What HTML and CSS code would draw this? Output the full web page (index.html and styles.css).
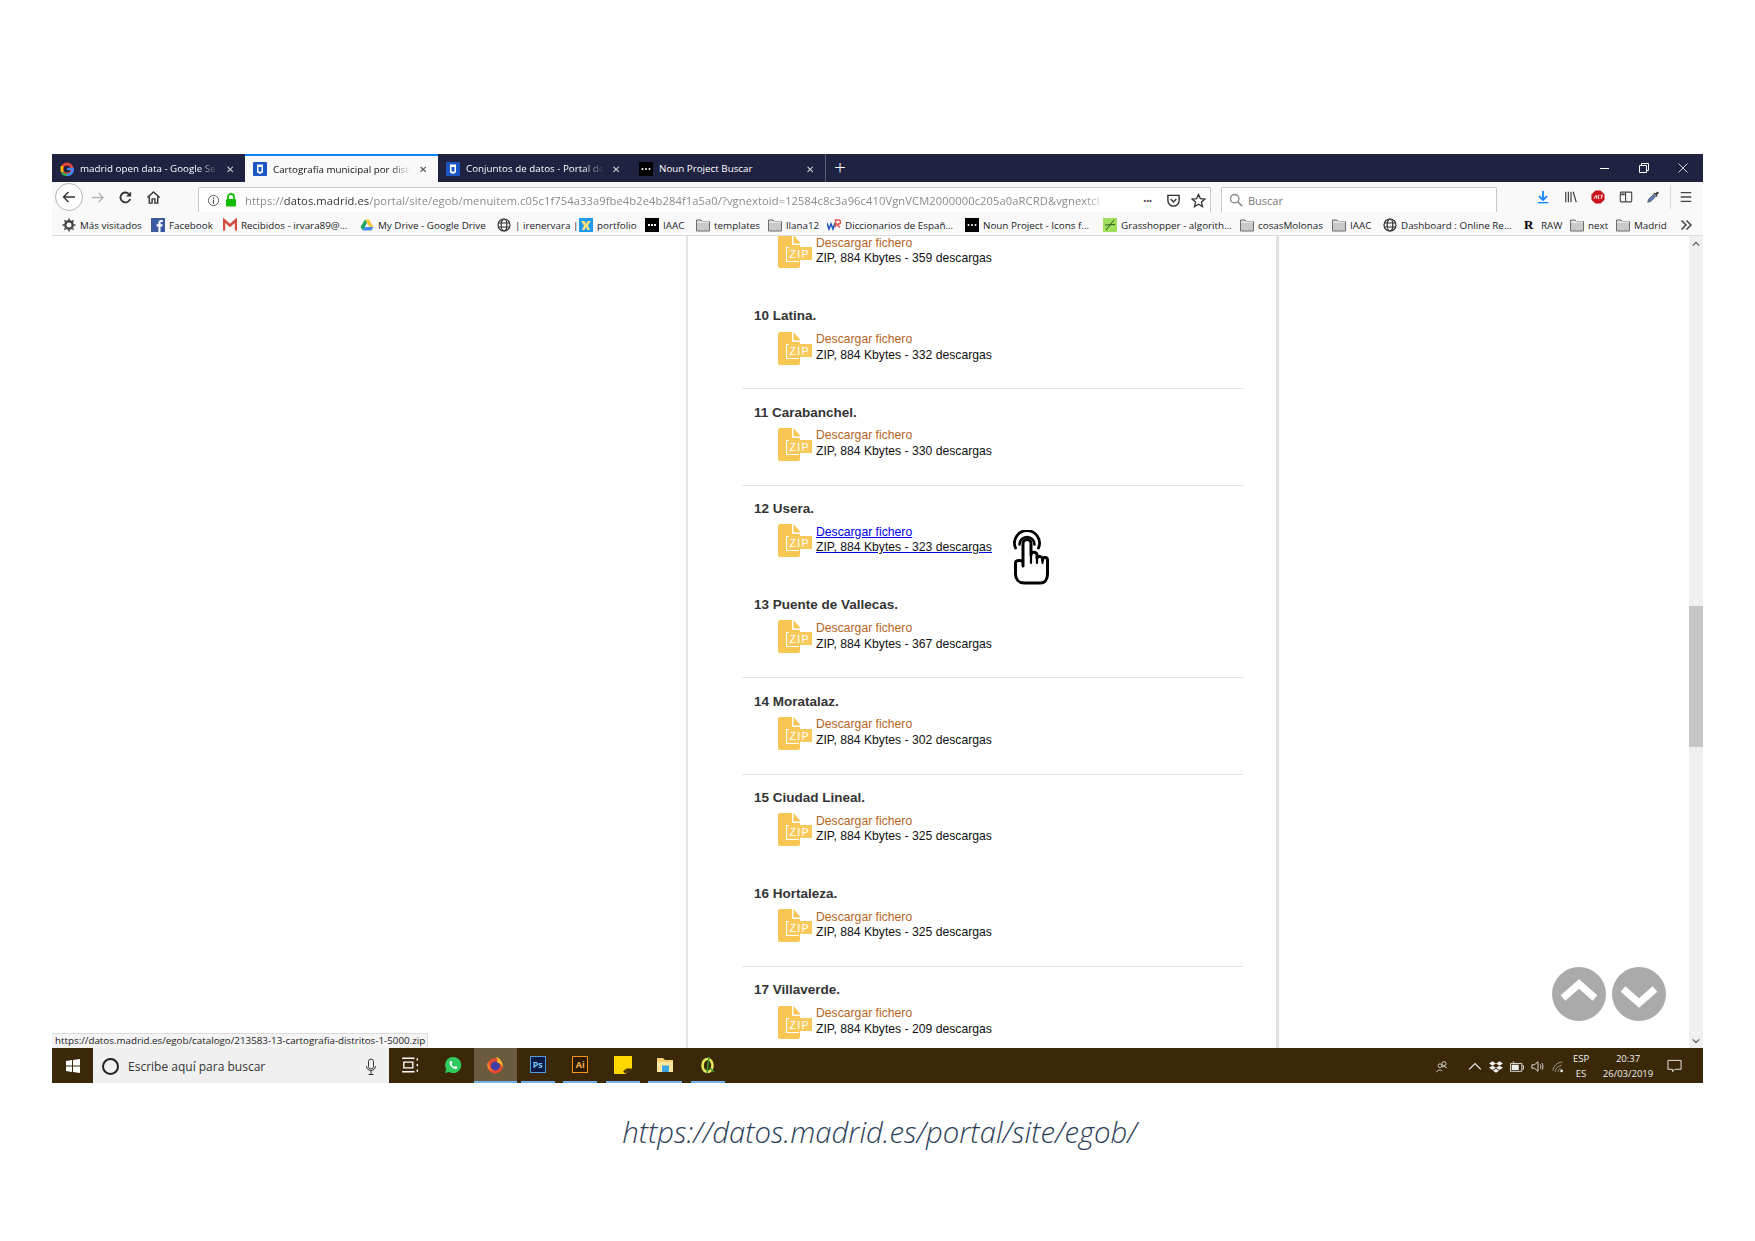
FILE: index.html
```html
<!DOCTYPE html>
<html lang="es">
<head>
<meta charset="utf-8">
<title>Cartografía municipal por distritos</title>
<link rel="stylesheet" href="styles.css">
</head>
<body>
<svg class="defs" width="0" height="0" aria-hidden="true">
  <symbol id="zip" viewBox="0 0 34 33">
    <path d="M2 0H14V9a1 1 0 0 0 1 1H22V31a2 2 0 0 1-2 2H2a2 2 0 0 1-2-2V2a2 2 0 0 1 2-2Z" fill="#f7c654"/>
    <path d="M15.5 0 22 7.5V8.5H15.5Z" fill="#f7c654"/>
    <rect x="9" y="12" width="25" height="13" fill="#f9c95c"/>
    <path d="M11 12.500H8.500V26.500H21" fill="none" stroke="#fff" stroke-width="1.100"/>
  </symbol>
  <symbol id="folder" viewBox="0 0 14 13">
    <path d="M.5 1.5H5L6.5 3H13.5V12.5H.5Z" fill="#c9c9c9" stroke="#6d6d6d"/>
    <path d="M1 3.5H13" stroke="#fff"/>
  </symbol>
  <symbol id="madrid" viewBox="0 0 14 14">
    <rect width="14" height="14" rx="1" fill="#1c55c4"/>
    <path d="M4 2.5H10V10.5L7 12 4 10.5Z" fill="#fff"/>
    <path d="M5.5 5H8.5V9.5H5.500Z" fill="#1c55c4"/>
  </symbol>
  <symbol id="noun" viewBox="0 0 14 14">
    <rect width="14" height="14" fill="#000"/>
    <circle cx="3.500" cy="7" r="1" fill="#fff"/><circle cx="7" cy="7" r="1" fill="#fff"/><circle cx="10.500" cy="7" r="1" fill="#fff"/>
  </symbol>
  <symbol id="globe" viewBox="0 0 14 14">
    <g fill="none" stroke="#333" stroke-width="1.200"><circle cx="7" cy="7" r="6"/><ellipse cx="7" cy="7" rx="2.800" ry="6"/><path d="M1 5H13M1 9H13"/></g>
  </symbol>
</svg>

<div class="screen">
  <div class="tabbar">
    <div class="tab">
      <svg class="fav" viewBox="0 0 14 14"><circle cx="7" cy="7" r="5" fill="none" stroke="#ea4335" stroke-width="3"/><path d="M7 7H13C13 10 10.500 13 7 13" fill="none" stroke="#4285f4" stroke-width="2.500"/><path d="M2 10.500C3 12 5 13 7 13" fill="none" stroke="#34a853" stroke-width="2.500"/><path d="M2 4V10" stroke="#fbbc05" stroke-width="2.500"/></svg>
      <span class="tab-title">madrid open data - Google Sea</span><span class="close">✕</span>
    </div>
    <div class="tab active">
      <svg class="fav"><use href="#madrid"/></svg>
      <span class="tab-title">Cartografía municipal por distr</span><span class="close">✕</span>
    </div>
    <div class="tab">
      <svg class="fav"><use href="#madrid"/></svg>
      <span class="tab-title">Conjuntos de datos - Portal de</span><span class="close">✕</span>
    </div>
    <div class="tab tab-last">
      <svg class="fav"><use href="#noun"/></svg>
      <span class="tab-title">Noun Project Buscar</span><span class="close">✕</span>
    </div>
    <div class="newtab">+</div>
    <div class="winctl">
      <svg viewBox="0 0 10 10"><path d="M0 5.500H9" stroke="#fff"/></svg>
      <svg viewBox="0 0 10 10"><path d="M.5 2.500H7.500V9.500H.5ZM2.500 2.500V.5H9.500V7.500H7.500" fill="none" stroke="#fff"/></svg>
      <svg viewBox="0 0 10 10"><path d="M.5.500 9.500 9.500M9.500.500.5 9.500" stroke="#fff" stroke-width=".8"/></svg>
    </div>
  </div>

  <div class="toolbar">
    <div class="navs">
      <span class="backbtn"><svg viewBox="0 0 16 16"><path d="M14 8H2.500M7.500 3 2.500 8 7.500 13" fill="none" stroke="#333" stroke-width="1.400"/></svg></span>
      <svg class="nav-ico" viewBox="0 0 16 16"><path d="M2 8H13.500M9 3 14 8 9 13" fill="none" stroke="#b5b5b5" stroke-width="1.400"/></svg>
      <svg class="nav-ico" viewBox="0 0 16 16"><path d="M13 9.500A5.300 5.300 0 1 1 11.500 4" fill="none" stroke="#333" stroke-width="2"/><path d="M14 1.500V7H8.500Z" fill="#333"/></svg>
      <svg class="nav-ico" viewBox="0 0 16 16"><path d="M1.500 8 8 2 14.500 8M3.500 7V14H6.500V9.500H9.500V14H12.500V7" fill="none" stroke="#333" stroke-width="1.500"/></svg>
    </div>
    <div class="urlbar">
      <svg class="info" viewBox="0 0 14 14"><circle cx="7" cy="7" r="5.500" fill="none" stroke="#555"/><path d="M7 6V10.500M7 3.500V5" stroke="#555" stroke-width="1.300"/></svg>
      <svg class="lock" viewBox="0 0 12 14"><path d="M3 6V4a3 3 0 0 1 6 0V6" fill="none" stroke="#12bc00" stroke-width="1.800"/><rect x="1" y="6" width="10" height="7.500" rx="1" fill="#12bc00"/></svg>
      <span class="url">https://<b>datos.madrid.es</b>/portal/site/egob/menuitem.c05c1f754a33a9fbe4b2e4b284f1a5a0/?vgnextoid=12584c8c3a96c410VgnVCM2000000c205a0aRCRD&amp;vgnextcl</span>
      <span class="dots">•••</span>
      <svg class="pa" viewBox="0 0 16 16"><path d="M2 2.500H14V8A6 6 0 0 1 2 8Z" fill="none" stroke="#333" stroke-width="1.500"/><path d="M5 6.500 8 9.500 11 6.500" fill="none" stroke="#333" stroke-width="1.500"/></svg>
      <svg class="pa" viewBox="0 0 16 16"><path d="M8 1.500 10 6 14.800 6.500 11.200 9.700 12.300 14.500 8 12 3.700 14.500 4.800 9.700 1.200 6.500 6 6Z" fill="none" stroke="#333" stroke-width="1.400"/></svg>
    </div>
    <div class="searchbar">
      <svg viewBox="0 0 16 16"><circle cx="6.500" cy="6.500" r="4.800" fill="none" stroke="#8a8a8a" stroke-width="1.600"/><path d="M10 10 15 15" stroke="#8a8a8a" stroke-width="1.800"/></svg>
      <span>Buscar</span>
    </div>
    <div class="tools">
      <svg viewBox="0 0 16 16"><path d="M8 1V11M3.500 7 8 11.500 12.500 7" fill="none" stroke="#0a84ff" stroke-width="2"/><path d="M2 14.500H14" stroke="#0a84ff" stroke-width="1.500"/></svg>
      <svg viewBox="0 0 16 16"><path d="M2 2V14M5 2V14M8 2V14M10.500 2 14 14" fill="none" stroke="#444" stroke-width="1.400"/></svg>
      <svg viewBox="0 0 16 16"><path d="M5 .5H11L15.500 5V11L11 15.500H5L.5 11V5Z" fill="#c8141b"/><path d="M3.500 10 5.500 6M6.500 10V6M9.500 6H8.500V10H9.500M11 6H13L11.500 10" fill="none" stroke="#fff" stroke-width="1.100"/></svg>
      <svg viewBox="0 0 16 16"><rect x="1.500" y="2.500" width="13" height="11" rx="1" fill="none" stroke="#444" stroke-width="1.300"/><path d="M7.500 2.500V13.500" stroke="#444" stroke-width="1.300"/><rect x="2.500" y="4" width="4" height="2" fill="#444"/></svg>
      <svg viewBox="0 0 16 16"><path d="M2 14 3 10.500 8.500 5 11 7.500 5.500 13Z" fill="#5c7fc0" stroke="#555"/><path d="M9 3.500 10.500 5 13 2.500 14 3.500 11.500 6 13 7.500" fill="#333" stroke="#333" stroke-width="1.200"/></svg>
      <i class="toolsep"></i>
      <svg viewBox="0 0 16 16"><path d="M2 3H14M2 8H14M2 13H14" stroke="#444" stroke-width="1.600"/></svg>
    </div>
  </div>

  <nav class="bookmarks">
    <a class="bm"><svg viewBox="0 0 14 14"><circle cx="7" cy="7" r="3.700" fill="none" stroke="#444" stroke-width="2.400"/><path d="M7 .5V13.500M.5 7H13.500M2.400 2.400 11.600 11.600M11.600 2.400 2.400 11.600" stroke="#444" stroke-width="1.500" stroke-dasharray="2 9.500"/></svg><span>Más visitados</span></a>
    <a class="bm"><svg viewBox="0 0 14 14"><rect width="14" height="14" fill="#3b5a9f"/><path d="M9.500 14V8.500H11.300L11.600 6.300H9.500V5C9.500 4.300 9.700 3.900 10.600 3.900H11.700V2C11.300 2 10.800 1.900 10.200 1.900 8.600 1.900 7.400 2.900 7.400 4.700V6.300H5.600V8.500H7.400V14Z" fill="#fff"/></svg><span>Facebook</span></a>
    <a class="bm"><svg viewBox="0 0 14 14"><path d="M1 12.500V2L7 7.500 13 2V12.500" fill="none" stroke="#d54b3d" stroke-width="2.400"/></svg><span>Recibidos - irvara89@...</span></a>
    <a class="bm"><svg viewBox="0 0 14 14"><path d="M5 1.500H9L13.500 9H9.500Z" fill="#f7c634"/><path d="M5 1.500 7 5 2.800 12.500.5 9Z" fill="#1fa463"/><path d="M4.500 9H13.500L11.300 12.500H2.800Z" fill="#4688f4"/></svg><span>My Drive - Google Drive</span></a>
    <a class="bm"><svg><use href="#globe"/></svg><span>| irenervara |</span></a>
    <a class="bm"><svg viewBox="0 0 14 14"><rect width="14" height="14" fill="#1e9bef"/><path d="M2 3H5.500L7 6 8.500 3H12L9 7.500 11 12H8.500L7 9 5.500 12H3L5 7.500Z" fill="#ffe27a"/></svg><span>portfolio</span></a>
    <a class="bm"><svg viewBox="0 0 14 14"><rect width="14" height="14" fill="#000"/><path d="M3 7H11" stroke="#fff" stroke-width="2" stroke-dasharray="2 1"/></svg><span>IAAC</span></a>
    <a class="bm"><svg><use href="#folder"/></svg><span>templates</span></a>
    <a class="bm"><svg><use href="#folder"/></svg><span>llana12</span></a>
    <a class="bm"><svg viewBox="0 0 14 14"><path d="M0 5 2 11 4 6 6 11 8 5" fill="none" stroke="#2458c6" stroke-width="1.600"/><path d="M8.500 9V2H11.500A2 2 0 0 1 11.500 6H9.500L13 9.500" fill="none" stroke="#e2554a" stroke-width="1.500"/></svg><span>Diccionarios de Españ...</span></a>
    <a class="bm"><svg><use href="#noun"/></svg><span>Noun Project - Icons f...</span></a>
    <a class="bm"><svg viewBox="0 0 14 14"><rect width="14" height="14" fill="#9ede5c"/><path d="M3 12 11 2M2 7 12 6.500" stroke="#2d5a1c"/></svg><span>Grasshopper - algorith...</span></a>
    <a class="bm"><svg><use href="#folder"/></svg><span>cosasMolonas</span></a>
    <a class="bm"><svg><use href="#folder"/></svg><span>IAAC</span></a>
    <a class="bm"><svg><use href="#globe"/></svg><span>Dashboard : Online Re...</span></a>
    <a class="bm"><b class="r-logo">R</b><span>RAW</span></a>
    <a class="bm"><svg><use href="#folder"/></svg><span>next</span></a>
    <a class="bm"><svg><use href="#folder"/></svg><span>Madrid</span></a>
    <svg class="more" viewBox="0 0 12 12"><path d="M1.500 1.500 6 6 1.500 10.500M6.500 1.500 11 6 6.500 10.500" fill="none" stroke="#444" stroke-width="1.500"/></svg>
  </nav>

  <div class="page">
    <main class="viewport">
      <section class="panel">
        <div class="list">
          <article class="row row-cut">
            <div class="file"><svg class="zip" viewBox="0 0 34 33"><use href="#zip"/><text x="11.500" y="22.500" class="ziptext">ZIP</text></svg><p><a>Descargar fichero</a><br>ZIP, 884 Kbytes - 359 descargas</p></div>
          </article>
          <article class="row sep">
            <h3>10 Latina.</h3>
            <div class="file"><svg class="zip" viewBox="0 0 34 33"><use href="#zip"/><text x="11.500" y="22.500" class="ziptext">ZIP</text></svg><p><a>Descargar fichero</a><br>ZIP, 884 Kbytes - 332 descargas</p></div>
          </article>
          <article class="row sep">
            <h3>11 Carabanchel.</h3>
            <div class="file"><svg class="zip" viewBox="0 0 34 33"><use href="#zip"/><text x="11.500" y="22.500" class="ziptext">ZIP</text></svg><p><a>Descargar fichero</a><br>ZIP, 884 Kbytes - 330 descargas</p></div>
          </article>
          <article class="row">
            <h3>12 Usera.</h3>
            <div class="file hover"><svg class="zip" viewBox="0 0 34 33"><use href="#zip"/><text x="11.500" y="22.500" class="ziptext">ZIP</text></svg><p><a>Descargar fichero</a><br>ZIP, 884 Kbytes - 323 descargas</p></div>
          </article>
          <article class="row sep">
            <h3>13 Puente de Vallecas.</h3>
            <div class="file"><svg class="zip" viewBox="0 0 34 33"><use href="#zip"/><text x="11.500" y="22.500" class="ziptext">ZIP</text></svg><p><a>Descargar fichero</a><br>ZIP, 884 Kbytes - 367 descargas</p></div>
          </article>
          <article class="row sep">
            <h3>14 Moratalaz.</h3>
            <div class="file"><svg class="zip" viewBox="0 0 34 33"><use href="#zip"/><text x="11.500" y="22.500" class="ziptext">ZIP</text></svg><p><a>Descargar fichero</a><br>ZIP, 884 Kbytes - 302 descargas</p></div>
          </article>
          <article class="row">
            <h3>15 Ciudad Lineal.</h3>
            <div class="file"><svg class="zip" viewBox="0 0 34 33"><use href="#zip"/><text x="11.500" y="22.500" class="ziptext">ZIP</text></svg><p><a>Descargar fichero</a><br>ZIP, 884 Kbytes - 325 descargas</p></div>
          </article>
          <article class="row sep">
            <h3>16 Hortaleza.</h3>
            <div class="file"><svg class="zip" viewBox="0 0 34 33"><use href="#zip"/><text x="11.500" y="22.500" class="ziptext">ZIP</text></svg><p><a>Descargar fichero</a><br>ZIP, 884 Kbytes - 325 descargas</p></div>
          </article>
          <article class="row">
            <h3>17 Villaverde.</h3>
            <div class="file"><svg class="zip" viewBox="0 0 34 33"><use href="#zip"/><text x="11.500" y="22.500" class="ziptext">ZIP</text></svg><p><a>Descargar fichero</a><br>ZIP, 884 Kbytes - 209 descargas</p></div>
          </article>
        </div>
      </section>
    </main>
    <aside class="scrollbar">
      <svg class="sb-arrow" viewBox="0 0 10 6"><path d="M1 5 5 1 9 5" fill="none" stroke="#555" stroke-width="1.500"/></svg>
      <div class="thumb"></div>
      <svg class="sb-arrow sb-down" viewBox="0 0 10 6"><path d="M1 1 5 5 9 1" fill="none" stroke="#555" stroke-width="1.500"/></svg>
    </aside>

    <svg class="hand" viewBox="0 0 36 55">
      <g fill="none" stroke="#000" stroke-linecap="round" stroke-linejoin="round">
        <path d="M2.500 18A12.500 12.500 0 1 1 25.500 18" stroke-width="2.800"/>
        <path d="M6.500 14.500A7.500 7.500 0 1 1 21.500 14.500" stroke-width="2.600"/>
        <path d="M10 36V13.500a4 4 0 0 1 8 0V25a3 3 0 0 1 6 .5V28a3 3 0 0 1 5.500 .5V30a2.500 2.500 0 0 1 5 0V44c0 5-2.500 9-7 9H11c-5 0-8.500-3.500-8.500-9V33c0-3.500 7.500-3.500 7.500 0Z" fill="#fff" stroke-width="3"/>
        <path d="M18 25V33M24 26V33M29.500 29V33" stroke-width="2.200"/>
      </g>
    </svg>

    <div class="pager">
      <span class="round"><svg viewBox="0 0 54 54"><path d="M11 31 27 17 43 31" fill="none" stroke="#fff" stroke-width="7"/></svg></span>
      <span class="round"><svg viewBox="0 0 54 54"><path d="M11 22 27 36 43 22" fill="none" stroke="#fff" stroke-width="7"/></svg></span>
    </div>

    <div class="status">https://datos.madrid.es/egob/catalogo/213583-13-cartografia-distritos-1-5000.zip</div>
  </div>

  <footer class="taskbar">
    <div class="start"><svg viewBox="0 0 14 14"><path d="M0 2 6 1.100V6.500H0ZM7 1 14 0V6.500H7ZM0 7.500H6V12.900L0 12ZM7 7.500H14V14L7 13Z" fill="#fff"/></svg></div>
    <div class="tsearch">
      <i class="cortana"></i><span>Escribe aquí para buscar</span>
      <svg viewBox="0 0 12 18"><rect x="3.500" y="1" width="5" height="10" rx="2.500" fill="none" stroke="#333"/><path d="M1.500 8C1.500 14 10.500 14 10.500 8M6 13V16M3.500 16.500H8.500" fill="none" stroke="#333"/></svg>
    </div>
    <div class="tile"><svg viewBox="0 0 16 16"><path d="M1 2H12M1 14H12M2.500 5.500H10.500V10.500H2.500ZM14.500 2V4M14.500 7V9M14.500 12V14" fill="none" stroke="#fff" stroke-width="1.200"/></svg></div>
    <div class="tile"><svg viewBox="0 0 18 18"><path d="M9 1A8 8 0 0 0 2.200 13L1 17 5.200 15.900A8 8 0 1 0 9 1Z" fill="#2ecc5e"/><path d="M6 5C4.500 7 7 13 12.500 13L13.500 11 11.500 10 10.500 11C9 10.500 8 9.500 7.500 8L8.500 7 7.500 5Z" fill="#fff"/></svg></div>
    <div class="tile current"><svg viewBox="0 0 20 20"><circle cx="10" cy="11" r="8.500" fill="#e8482d"/><circle cx="10.500" cy="11" r="5" fill="#3f3fa8"/><path d="M11 .5C16 3 19.500 7 18.500 13 17.500 10 15 7.500 12 7 13 5 12.500 3 11 .5Z" fill="#ffb52e"/><path d="M3 6C2 10 4 15 9 16 5.500 17 2 14 1.500 10 1.500 8 2 7 3 6Z" fill="#ff9a2e"/></svg></div>
    <div class="tile open"><span class="app ps">Ps</span></div>
    <div class="tile open"><span class="app ai">Ai</span></div>
    <div class="tile open"><svg viewBox="0 0 16 16"><path d="M0 0H16V11L11 16H0Z" fill="#ffd800"/><path d="M11 16V11H16Z" fill="#3b2a0c"/><path d="M11 16 8 14 11 11Z" fill="#3b2a0c"/></svg></div>
    <div class="tile open"><svg viewBox="0 0 18 16"><path d="M1 1H7L9 3H17V15H1Z" fill="#f4cf6e"/><path d="M1 5H17V15H1Z" fill="#fbe59f"/><rect x="6" y="8.500" width="7" height="6.500" fill="#3aa5e0"/></svg></div>
    <div class="tile open"><svg viewBox="0 0 16 18"><ellipse cx="7.500" cy="9.500" rx="5" ry="6.500" fill="none" stroke="#e8e65c" stroke-width="2.600"/><path d="M9 1 7 17M10 12 14 16" stroke="#3f9b32" stroke-width="1.600"/></svg></div>
    <div class="tray">
      <svg class="tr tr-people" viewBox="0 0 16 16"><circle cx="10.500" cy="4.500" r="2.500" fill="none" stroke="#eee"/><circle cx="5.500" cy="7" r="2.300" fill="none" stroke="#eee"/><path d="M1.500 15C2 11.500 8 11.500 8 14M8 8.500C10 7.800 13 8 14 10" fill="none" stroke="#eee"/></svg>
      <svg class="tr" viewBox="0 0 12 8"><path d="M1 6.500 6 1.500 11 6.500" fill="none" stroke="#eee"/></svg>
      <svg class="tr" viewBox="0 0 16 14"><path d="M4 1 8 3.500 4 6 0 3.500ZM12 1 16 3.500 12 6 8 3.500ZM4 6 8 8.500 4 11 0 8.500ZM12 6 16 8.500 12 11 8 8.500ZM4.500 11.800 8 9.500 11.500 11.800 8 14Z" fill="#eee"/></svg>
      <svg class="tr" viewBox="0 0 16 14"><path d="M.5 3.500V12.500H13.500V3.500ZM14 6H15.500V10H14" fill="none" stroke="#eee"/><rect x="2" y="5" width="8" height="6" fill="#eee"/><path d="M3.500 1 5 4" stroke="#eee"/></svg>
      <svg class="tr" viewBox="0 0 16 14"><path d="M1 5H4L8 1.500V12.500L4 9H1Z" fill="none" stroke="#eee"/><path d="M10.500 4.500C11.500 6 11.500 8 10.500 9.500M12.500 3C14 5 14 9 12.500 11" fill="none" stroke="#eee"/></svg>
      <svg class="tr" viewBox="0 0 16 14"><path d="M1 12C1 7 6 2 12 2M4 13C4 9 7 6 11 6M7 13C7 11 8.500 9.500 10 9.500" fill="none" stroke="#aaa"/><circle cx="11" cy="12" r="1.500" fill="#eee"/></svg>
      <div class="lang">ESP<br>ES</div>
      <div class="clock">20:37<br>26/03/2019</div>
      <svg class="notif" viewBox="0 0 16 14"><path d="M1 1H15V10.500H8.500L6 13V10.500H1Z" fill="none" stroke="#eee"/></svg>
    </div>
  </footer>

  <p class="caption">https://datos.madrid.es/portal/site/egob/</p>
</div>
</body>
</html>
```

FILE: styles.css
```css
* { box-sizing: border-box; }
html, body { margin: 0; height: 100%; background: #fff; overflow: hidden; }
.defs { position: absolute; }
.screen { width: 1651px; margin: 154px 0 0 52px; font-family: "Open Sans", "Noto Sans", sans-serif; }

/* tabs */
.tabbar { height: 28px; background: #1f2240; display: flex; color: #fff; font-size: 9.800px; }
.tab { width: 193px; display: flex; align-items: center; padding: 1px 9px 0 8px; gap: 6px; }
.tab-last { width: 195px; border-right: 1px solid #5a5c74; }
.tab.active { background: #f9f9fa; color: #111; border-top: 2px solid #0a84ff; padding-top: 0; }
.fav { width: 14px; height: 14px; flex: none; }
.tab-title {
  flex: 1; min-width: 0; white-space: nowrap;
  -webkit-mask-image: linear-gradient(90deg, #000 85%, transparent);
  mask-image: linear-gradient(90deg, #000 85%, transparent);
}
.tab-last .tab-title { -webkit-mask-image: none; mask-image: none; }
.close { width: 12px; font-size: 10px; text-align: center; flex: none; opacity: .8; }
.newtab { width: 28px; text-align: center; font-size: 21px; line-height: 26px; font-weight: 300; }
.winctl { margin-left: auto; display: flex; align-items: center; }
.winctl svg { width: 10px; height: 10px; margin-right: 29px; }
.winctl svg:last-child { margin-right: 15px; }

/* toolbar */
.toolbar { height: 30px; background: #f9f9fa; display: flex; align-items: flex-end; }
.navs { width: 146px; height: 30px; display: flex; align-items: center; padding-left: 3px; flex: none; }
.backbtn { width: 28px; height: 28px; border: 1px solid #b4b4b4; border-radius: 50%; background: #fff; display: flex; align-items: center; justify-content: center; flex: none; margin-right: 7px; }
.backbtn svg { width: 16px; height: 16px; }
.nav-ico { width: 15px; height: 15px; margin-right: 13px; flex: none; }
.urlbar {
  width: 1013px; height: 25px; background: #fff; border: 1px solid #c8c8c8; border-bottom: 0; border-radius: 2px 2px 0 0;
  display: flex; align-items: center; padding: 0 4px 0 8px; flex: none;
}
.info { width: 13px; height: 13px; flex: none; margin-right: 5px; }
.lock { width: 12px; height: 14px; flex: none; margin-right: 8px; }
.url {
  flex: 1; min-width: 0; white-space: nowrap; overflow: hidden; font-size: 11.200px; color: #8a8a8a; letter-spacing: .08px;
  -webkit-mask-image: linear-gradient(90deg, #000 97%, transparent);
  mask-image: linear-gradient(90deg, #000 97%, transparent);
}
.url b { font-weight: 400; color: #333; }
.dots { font-size: 9px; color: #444; margin-left: 33px; width: 23px; letter-spacing: -.5px; flex: none; }
.pa { width: 15px; height: 15px; margin-right: 10px; flex: none; }
.pa:last-child { margin-right: 0; }
.searchbar {
  width: 276px; height: 25px; margin-left: 10px; background: #fff; border: 1px solid #c8c8c8; border-bottom: 0; border-radius: 2px 2px 0 0;
  display: flex; align-items: center; padding-left: 7px; gap: 5px; font-size: 11px; color: #777; flex: none;
}
.searchbar svg { width: 14px; height: 14px; }
.tools { flex: 1; height: 30px; display: flex; align-items: center; padding-left: 39px; }
.tools svg { width: 14px; height: 14px; margin-right: 13.500px; flex: none; }
.toolsep { width: 1px; height: 24px; background: #d8d8d8; margin: 0 8px 0 -4px; flex: none; }

/* bookmarks */
.bookmarks {
  height: 24px; padding-top: 3px; background: #f9f9fa; border-bottom: 1px solid #dcdcde;
  display: grid; align-items: center; font-size: 9.850px; color: #222;
  grid-template-columns: 99px 72px 137px 137px 82px 66px 51px 72px 59px 138px 138px 137px 92px 51px 140px 47px 46px 64px 1fr;
}
.bm { display: flex; align-items: center; gap: 4px; white-space: nowrap; min-width: 0; }
.bm svg { width: 14px; height: 14px; flex: none; }
.bm:first-child { padding-left: 10px; }
.r-logo { font: 700 13px "Liberation Serif", serif; color: #000; width: 14px; padding-left: 1px; flex: none; }
.more { width: 12px; height: 12px; }

/* page */
.page { position: relative; height: 812px; display: flex; background: #fff; overflow: hidden; font-family: "Liberation Sans", Arial, sans-serif; }
.viewport { flex: 1; min-width: 0; overflow: hidden; }
.panel { width: 593px; height: 100%; margin-left: 634px; border-left: 2px solid #e2e2e2; border-right: 3px solid #e2e2e2; padding: 0 33px 0 54px; overflow: hidden; }
.list { margin-top: -39.200px; }
.row { height: 96.300px; padding: 15.300px 0 0 12px; color: #222; }
.row.row-cut { padding-top: 30.300px; }
.row.sep { border-bottom: 1px solid #e4e4e4; }
.row h3 { margin: 0; font-size: 13.500px; line-height: 15px; font-weight: 700; color: #333; }
.file { display: flex; margin: 8.200px 0 0 24px; color: #111; font-size: 12.200px; line-height: 15.500px; }
.zip { width: 34px; height: 33px; flex: none; margin-right: 4px; }
.ziptext { font: 400 10.500px "Liberation Sans", sans-serif; fill: #fff; letter-spacing: 1.300px; }
.file p { margin: .6px 0 0; white-space: nowrap; }
.file a { color: #b5651d; }
.hover p { text-decoration: underline; text-decoration-color: #00e; }
.hover a { color: #0000ee; }

/* scrollbar */
.scrollbar { width: 14px; background: #f0f0f0; display: flex; flex-direction: column; align-items: center; flex: none; }
.sb-arrow { width: 8px; height: 6px; margin-top: 5px; flex: none; }
.sb-down { margin-top: auto; margin-bottom: 4px; }
.thumb { width: 14px; height: 141px; background: #c6c6c6; margin-top: 359px; flex: none; }

/* overlays */
.hand { position: absolute; left: 961px; top: 294px; width: 36px; height: 55px; }
.pager { position: absolute; left: 1500px; top: 731px; display: flex; gap: 6px; }
.round { width: 54px; height: 54px; border-radius: 50%; background: #aaa; display: block; }
.round svg { display: block; width: 54px; height: 54px; }
.status {
  position: absolute; left: 0; bottom: 0; width: 376px; height: 15px; padding: 0 3px; white-space: nowrap; overflow: hidden;
  background: #f4f4f5; border: 1px solid #dcdcdc; border-bottom: 0; border-left: 0;
  font: 9.800px/14px "Open Sans", sans-serif; color: #222;
}

/* taskbar */
.taskbar { height: 35px; background: #3a2809; display: flex; color: #eee; }
.start { width: 41px; display: flex; align-items: center; justify-content: center; flex: none; }
.start svg { width: 14px; height: 14px; }
.tsearch { width: 296px; background: #f0f0f0; color: #333; display: flex; align-items: center; padding: 2px 12px 0 9px; font-size: 12px; flex: none; }
.tsearch svg { width: 12px; height: 18px; margin-left: auto; }
.cortana { width: 17px; height: 17px; border: 2px solid #222; border-radius: 50%; margin-right: 9px; }
.tile { width: 42.500px; display: flex; align-items: center; justify-content: center; flex: none; border-bottom: 2px solid transparent; }
.tile svg { width: 18px; height: 18px; }
.tile.current { background: #6a5a3e; border-bottom-color: #74b3e8; }
.tile.open { background: linear-gradient(#74b3e8, #74b3e8) center bottom / 34px 2px no-repeat; border-bottom: 0; padding-bottom: 2px; }
.app { width: 16px; height: 17px; border: 1px solid; font: 700 9px/15px "Open Sans", sans-serif; text-align: center; }
.ps { background: #0b1a44; border-color: #4d9bdc; color: #7fc3f5; }
.ai { background: #2e1a02; border-color: #f7931e; color: #f7b14a; }
.tray { flex: 1; display: flex; align-items: center; font-size: 9.500px; line-height: 15px; text-align: center; padding: 1px 0 0 706px; }
.tr { width: 14px; height: 13px; margin-right: 7px; flex: none; }
.tr-people { margin-right: 19px; }
.lang { width: 24px; margin-left: -4px; flex: none; }
.clock { width: 64px; margin-left: 3px; flex: none; }
.notif { width: 15px; height: 14px; margin-left: 6.500px; flex: none; }

.caption {
  margin: 29px 0 0; padding-left: 4px; text-align: center; white-space: nowrap;
  font: italic 300 29.300px/40px "Open Sans", "Noto Sans", sans-serif; color: #2c3e57;
}
```
